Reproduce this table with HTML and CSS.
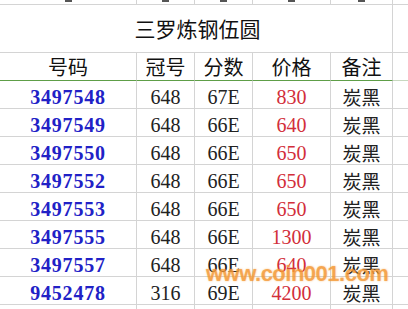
FILE: index.html
```html
<!DOCTYPE html>
<html lang="zh-CN">
<head>
<meta charset="utf-8">
<title>三罗炼钢伍圆</title>
<link rel="stylesheet" href="styles.css">
</head>
<body>
<div class="sheet">
  <div class="cell strip"><span class="mark"></span></div>
  <div class="cell strip"><span class="mark"></span></div>
  <div class="cell strip"><span class="mark"></span></div>
  <div class="cell strip"><span class="mark"></span></div>
  <div class="cell strip"><span class="mark"></span></div>
  <div class="cell strip last"></div>

  <div class="cell title">三罗炼钢伍圆</div>
  <div class="cell last"></div>

  <div class="cell head">号码</div>
  <div class="cell head">冠号</div>
  <div class="cell head">分数</div>
  <div class="cell head">价格</div>
  <div class="cell head">备注</div>
  <div class="cell last head-f"></div>

  <div class="cell num">3497548</div><div class="cell val">648</div><div class="cell val">67E</div><div class="cell price">830</div><div class="cell note">炭黑</div><div class="cell last"></div>
  <div class="cell num">3497549</div><div class="cell val">648</div><div class="cell val">66E</div><div class="cell price">640</div><div class="cell note">炭黑</div><div class="cell last"></div>
  <div class="cell num">3497550</div><div class="cell val">648</div><div class="cell val">66E</div><div class="cell price">650</div><div class="cell note">炭黑</div><div class="cell last"></div>
  <div class="cell num">3497552</div><div class="cell val">648</div><div class="cell val">66E</div><div class="cell price">650</div><div class="cell note">炭黑</div><div class="cell last"></div>
  <div class="cell num">3497553</div><div class="cell val">648</div><div class="cell val">66E</div><div class="cell price">650</div><div class="cell note">炭黑</div><div class="cell last"></div>
  <div class="cell num">3497555</div><div class="cell val">648</div><div class="cell val">66E</div><div class="cell price">1300</div><div class="cell note">炭黑</div><div class="cell last"></div>
  <div class="cell num">3497557</div><div class="cell val">648</div><div class="cell val">66E</div><div class="cell price">640</div><div class="cell note">炭黑</div><div class="cell last"></div>
  <div class="cell num">9452478</div><div class="cell val">316</div><div class="cell val">69E</div><div class="cell price">4200</div><div class="cell note">炭黑</div><div class="cell last"></div>

  <div class="cell"></div><div class="cell"></div><div class="cell"></div><div class="cell"></div><div class="cell"></div><div class="cell last"></div>

  <div class="watermark">www.coin001.com</div>
</div>
</body>
</html>
```

FILE: styles.css
```css
html, body {
  margin: 0;
  padding: 0;
  background: #ffffff;
}

body {
  width: 408px;
  height: 309px;
  overflow: hidden;
}

.sheet {
  position: relative;
  display: grid;
  grid-template-columns: 137px 58px 58px 78px 62px 15px;
  grid-template-rows: 5px 48px 28px repeat(8, 28px) 5px;
  width: 408px;
  height: 309px;
  overflow: hidden;
}

.cell {
  box-sizing: border-box;
  border-right: 1px solid #d4d4d4;
  border-bottom: 1px solid #d4d4d4;
  text-align: center;
  white-space: nowrap;
  overflow: hidden;
}

.last {
  border-right: none;
}

.strip {
  display: flex;
  justify-content: center;
  align-items: flex-start;
}

.mark {
  display: block;
  width: 7px;
  height: 2px;
  background: #555555;
}

.title {
  grid-column: 1 / span 5;
  font-family: "Noto Sans CJK SC", "Noto Sans", sans-serif;
  font-size: 21px;
  line-height: 47px;
  color: #111111;
  padding-left: 3px;
}

.head {
  font-family: "Noto Sans CJK SC", "Noto Sans", sans-serif;
  font-size: 20px;
  line-height: 27px;
  color: #111111;
  border-bottom-color: #5e9e48;
}

.head-f {
  border-bottom-color: #c8d8c0;
}

.num,
.val,
.price,
.note {
  padding-top: 5px;
  line-height: 22px;
}

.num {
  font-family: "Liberation Serif", serif;
  font-weight: bold;
  font-size: 20px;
  letter-spacing: 0.8px;
  color: #2121c6;
}

.val {
  font-family: "Liberation Serif", serif;
  font-size: 20px;
  color: #222222;
}

.price {
  font-family: "Liberation Serif", serif;
  font-size: 20px;
  color: #d22e3a;
}

.note {
  font-family: "Noto Sans CJK SC", "Noto Sans", sans-serif;
  font-size: 19px;
  color: #222222;
}

.watermark {
  position: absolute;
  left: 206px;
  top: 261px;
  font-family: "Liberation Sans", sans-serif;
  font-weight: bold;
  font-size: 22px;
  letter-spacing: -0.5px;
  color: rgba(244, 150, 50, 0.72);
  text-shadow: 0 0 2px rgba(244, 160, 60, 0.6);
  pointer-events: none;
}
```
